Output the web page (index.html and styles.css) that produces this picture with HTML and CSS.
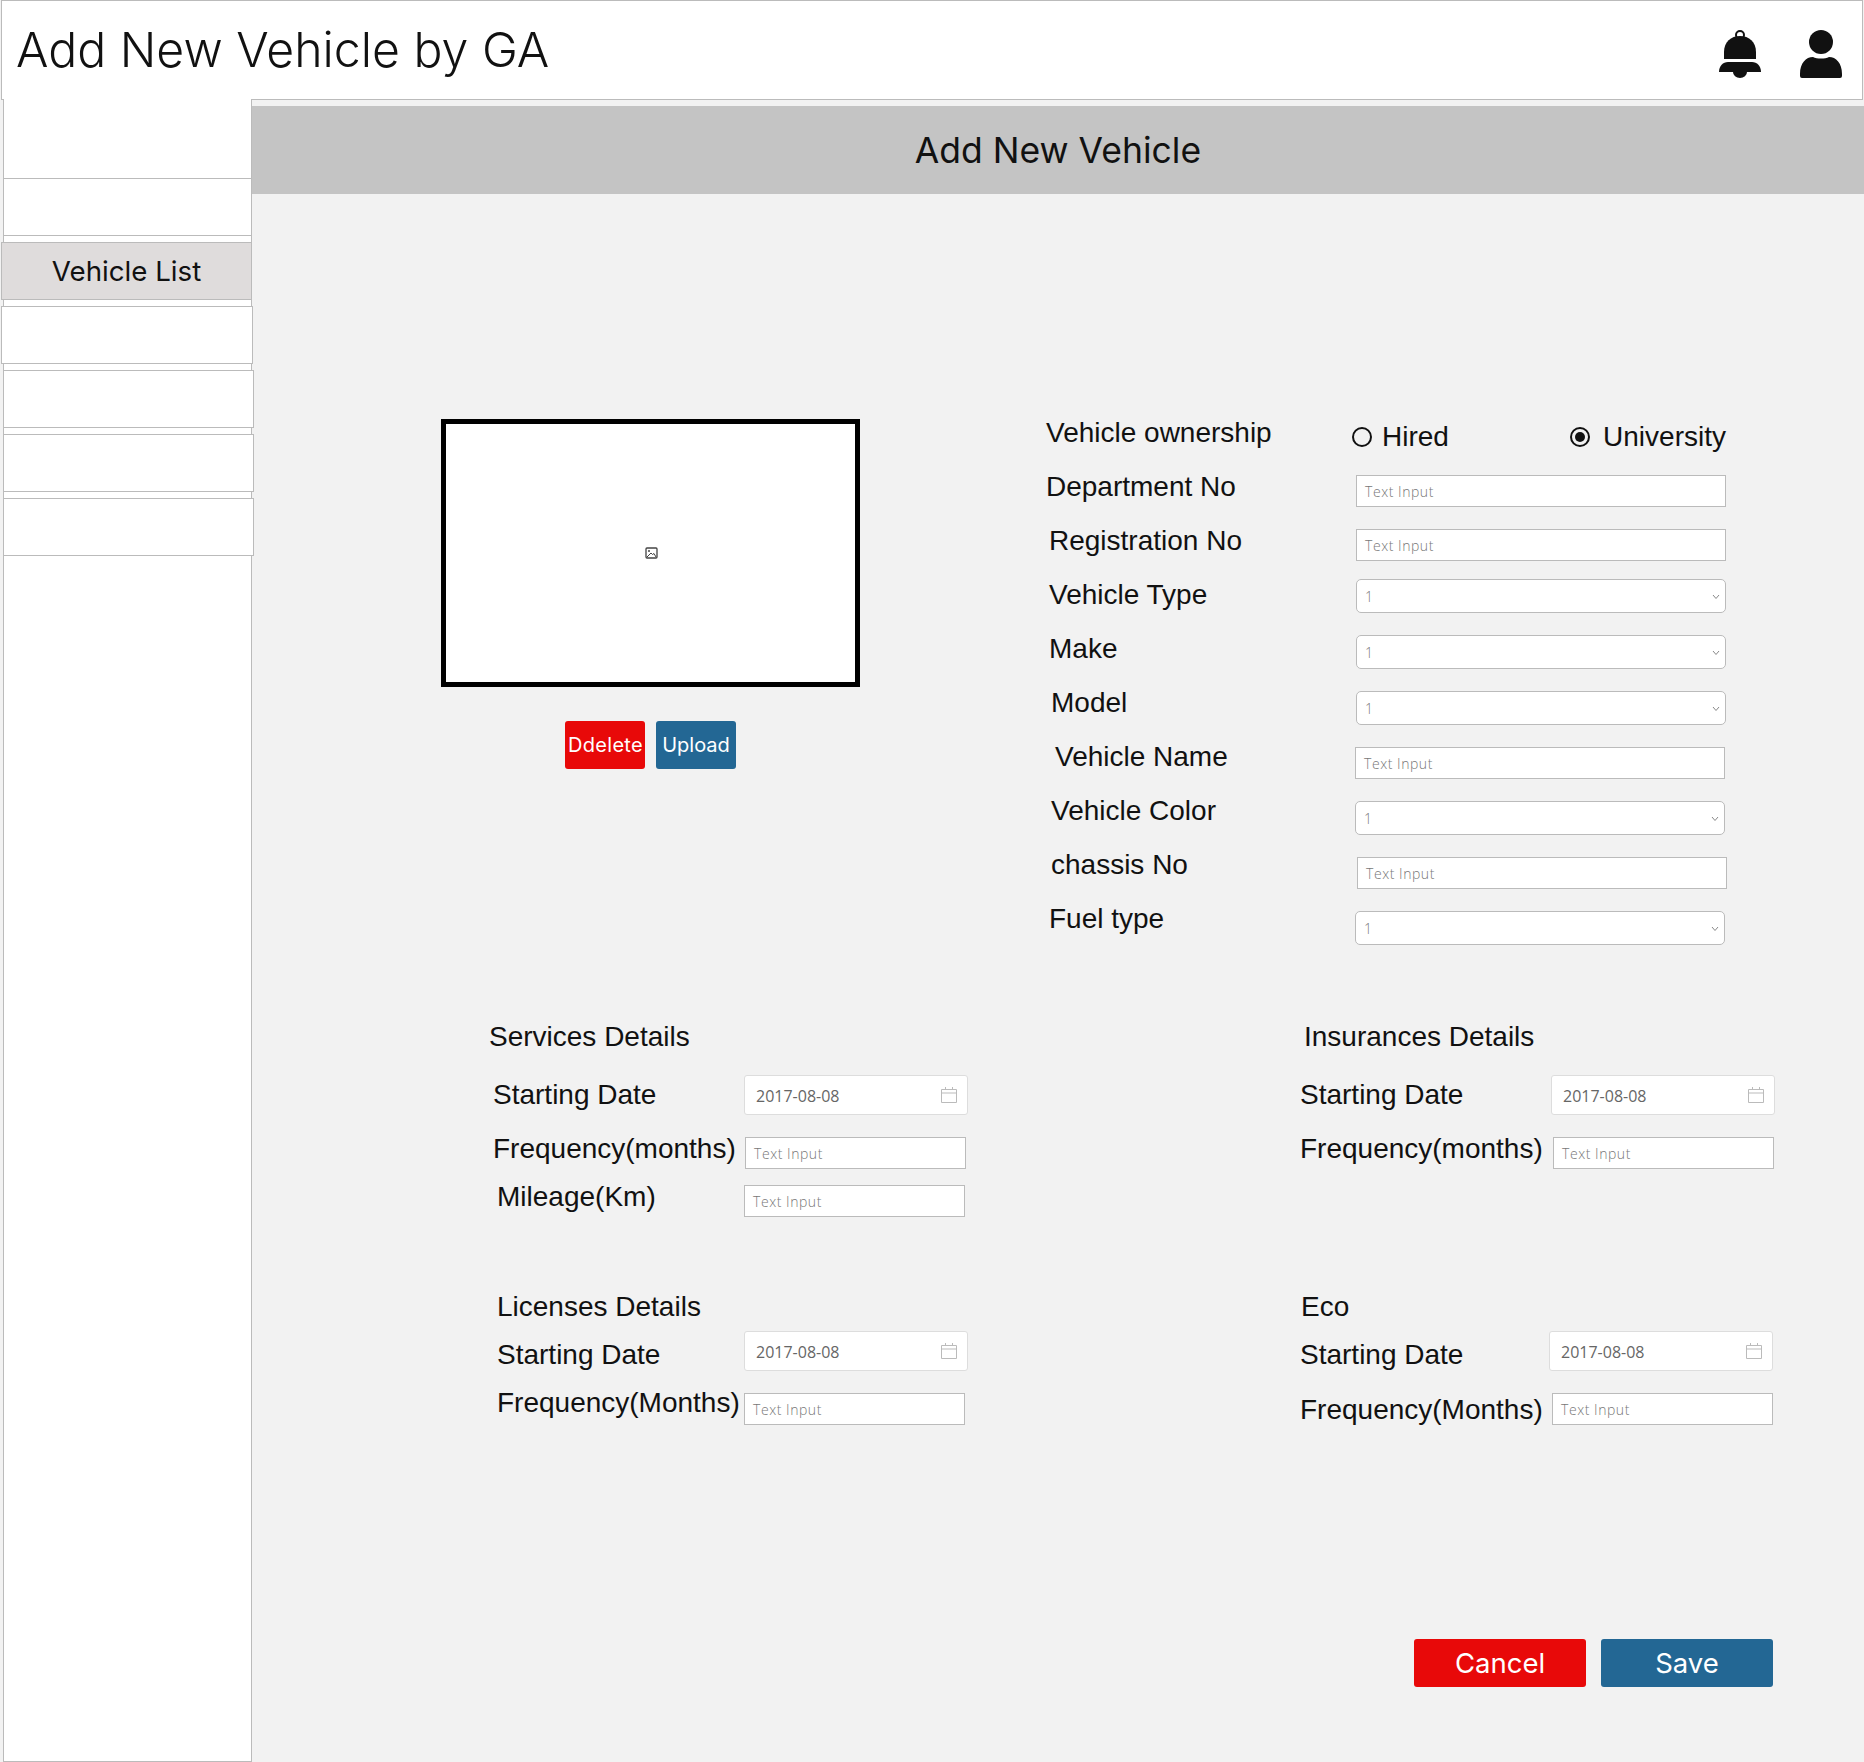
FILE: index.html
```html
<!DOCTYPE html>
<html>
<head>
    <meta charset="UTF-8">
    <title>Add New Vehicle by GA</title>
    <link rel="stylesheet" href="styles.css">
</head>
<body>
    <header class="topbar">
        <h1>Add New Vehicle by GA</h1>
        <div class="topbar-icons">
            <svg class="bell" width="44" height="48" viewBox="0 0 44 48">
                <circle cx="22" cy="5" r="4" fill="none" stroke="#111" stroke-width="2"/>
                <path d="M6 29V22C6 12 13 6 22 6C31 6 38 12 38 22V29Z" fill="#111"/>
                <path d="M1 42C1 36 5 32 10 32H34C39 32 43 36 43 42Z" fill="#111"/>
                <path d="M15 42a7 6 0 0 0 14 0Z" fill="#111"/>
            </svg>
            <svg class="user" width="42" height="48" viewBox="0 0 42 48">
                <circle cx="21" cy="12" r="12" fill="#111"/>
                <path d="M0 44C0 33 6 27 13 27C17 29 25 29 29 27C36 27 42 33 42 44V46a2 2 0 0 1-2 2H2a2 2 0 0 1-2-2Z" fill="#111"/>
            </svg>
        </div>
    </header>

    <div class="page">
        <nav class="sidebar">
            <div class="nav-first"></div>
            <div class="nav-second"></div>
            <div class="nav-item nav-active">Vehicle List</div>
            <div class="nav-item nav-left"></div>
            <div class="nav-item nav-wide"></div>
            <div class="nav-item nav-wide"></div>
            <div class="nav-item nav-wide"></div>
        </nav>

        <main class="main">
            <h2 class="banner">Add New Vehicle</h2>

            <section class="top-section">
                <div class="photo-col">
                    <div class="photo">
                        <svg class="photo-icon" width="13" height="12" viewBox="0 0 13 12">
                            <rect x="1" y="1" width="11" height="10" rx="1" fill="none" stroke="#444" stroke-width="1.3"/>
                            <circle cx="4" cy="4" r="1" fill="#444"/>
                            <path d="M2 10L6 6L7.5 7.5L9 6.5L11 10" fill="none" stroke="#444"/>
                        </svg>
                    </div>
                    <div class="photo-actions">
                        <button class="btn btn-red btn-delete">Ddelete</button>
                        <button class="btn btn-blue">Upload</button>
                    </div>
                </div>

                <div class="form-labels">
                    <div class="label">Vehicle ownership</div>
                    <div class="label">Department No</div>
                    <div class="label in-3">Registration No</div>
                    <div class="label in-3">Vehicle Type</div>
                    <div class="label in-3">Make</div>
                    <div class="label in-5">Model</div>
                    <div class="label in-9">Vehicle Name</div>
                    <div class="label in-5">Vehicle Color</div>
                    <div class="label in-5">chassis No</div>
                    <div class="label in-3">Fuel type</div>
                </div>

                <div class="form-controls">
                    <div class="radios">
                        <div class="radio"><span class="radio-mark"></span>Hired</div>
                        <div class="radio radio-gap"><span class="radio-mark radio-on"></span>University</div>
                    </div>
                    <div class="input wide nudge-1">Text Input</div>
                    <div class="input wide nudge-1">Text Input</div>
                    <div class="select wide nudge-1 up-4">1<svg class="chevron" width="8" height="6" viewBox="0 0 8 6"><path d="M1 1L4 4.5L7 1" fill="none" stroke="#888"/></svg></div>
                    <div class="select wide nudge-1">1<svg class="chevron" width="8" height="6" viewBox="0 0 8 6"><path d="M1 1L4 4.5L7 1" fill="none" stroke="#888"/></svg></div>
                    <div class="select wide nudge-1">1<svg class="chevron" width="8" height="6" viewBox="0 0 8 6"><path d="M1 1L4 4.5L7 1" fill="none" stroke="#888"/></svg></div>
                    <div class="input wide">Text Input</div>
                    <div class="select wide">1<svg class="chevron" width="8" height="6" viewBox="0 0 8 6"><path d="M1 1L4 4.5L7 1" fill="none" stroke="#888"/></svg></div>
                    <div class="input wide nudge-2">Text Input</div>
                    <div class="select wide">1<svg class="chevron" width="8" height="6" viewBox="0 0 8 6"><path d="M1 1L4 4.5L7 1" fill="none" stroke="#888"/></svg></div>
                </div>
            </section>

            <section class="details">
                <div class="block block-left">
                    <div class="label block-title">Services Details</div>
                    <div class="row">
                        <div class="label in-4 drop-4">Starting Date</div>
                        <div class="date">2017-08-08<svg width="16" height="16" viewBox="0 0 16 16"><path d="M.5 2.5H15.5V15.5H.5ZM.5 6H15.5M4.5 0V3M11.5 0V3" fill="none" stroke="#bbb"/></svg></div>
                    </div>
                    <div class="row">
                        <div class="label in-4 lift-4">Frequency(months)</div>
                        <div class="input short nudge-1">Text Input</div>
                    </div>
                    <div class="row row-tight">
                        <div class="label in-8 lift-4">Mileage(Km)</div>
                        <div class="input short">Text Input</div>
                    </div>
                </div>

                <div class="block block-right">
                    <div class="label block-title in-4">Insurances Details</div>
                    <div class="row">
                        <div class="label drop-4">Starting Date</div>
                        <div class="date">2017-08-08<svg width="16" height="16" viewBox="0 0 16 16"><path d="M.5 2.5H15.5V15.5H.5ZM.5 6H15.5M4.5 0V3M11.5 0V3" fill="none" stroke="#bbb"/></svg></div>
                    </div>
                    <div class="row">
                        <div class="label lift-4">Frequency(months)</div>
                        <div class="input short nudge-2">Text Input</div>
                    </div>
                </div>

                <div class="block block-left">
                    <div class="label block-title in-8">Licenses Details</div>
                    <div class="row row-first">
                        <div class="label in-8 drop-8">Starting Date</div>
                        <div class="date">2017-08-08<svg width="16" height="16" viewBox="0 0 16 16"><path d="M.5 2.5H15.5V15.5H.5ZM.5 6H15.5M4.5 0V3M11.5 0V3" fill="none" stroke="#bbb"/></svg></div>
                    </div>
                    <div class="row">
                        <div class="label in-8 lift-6">Frequency(Months)</div>
                        <div class="input short">Text Input</div>
                    </div>
                </div>

                <div class="block block-right">
                    <div class="label block-title in-1">Eco</div>
                    <div class="row row-first">
                        <div class="label drop-8">Starting Date</div>
                        <div class="date pull-2">2017-08-08<svg width="16" height="16" viewBox="0 0 16 16"><path d="M.5 2.5H15.5V15.5H.5ZM.5 6H15.5M4.5 0V3M11.5 0V3" fill="none" stroke="#bbb"/></svg></div>
                    </div>
                    <div class="row">
                        <div class="label drop-1">Frequency(Months)</div>
                        <div class="input short nudge-1">Text Input</div>
                    </div>
                </div>
            </section>

            <div class="actions">
                <button class="btn btn-red btn-big">Cancel</button>
                <button class="btn btn-blue btn-big">Save</button>
            </div>
        </main>
    </div>
</body>
</html>
```

FILE: styles.css
```css
* {
    box-sizing: border-box;
}

body {
    margin: 0;
    height: 1762px;
    overflow: hidden;
    background-color: #f2f2f2;
    color: #111;
    font-family: "Liberation Sans", Arial, sans-serif;
    display: flex;
    flex-direction: column;
}

/* top bar */
.topbar {
    height: 100px;
    flex: none;
    margin: 0 1px;
    padding: 0 20px 2px 14px;
    background-color: #fff;
    border: 1px solid #bbb;
    display: flex;
    justify-content: space-between;
    align-items: center;
}

.topbar h1 {
    margin: 0;
    font-family: Inter, sans-serif;
    font-size: 48.2px;
    font-weight: 300;
}

.topbar-icons {
    display: flex;
    gap: 38px;
    margin-top: 10px;
}

.page {
    flex: 1;
    display: flex;
    margin-top: -1px;
}

/* sidebar */
.sidebar {
    width: 249px;
    flex: none;
    margin-left: 3px;
    background-color: #fff;
    border-left: 1px solid #bbb;
    border-right: 1px solid #bbb;
    border-bottom: 1px solid #bbb;
    height: 1663px;
}

.nav-first {
    height: 80px;
    border-bottom: 1px solid #bbb;
}

.nav-second {
    height: 57px;
    border-bottom: 1px solid #bbb;
}

.nav-item {
    height: 58px;
    margin: 6px 0 0 -1px;
    background-color: #fff;
    border: 1px solid #bbb;
    position: relative;
}

.nav-active {
    margin: 6px -1px 0 -3px;
    background-color: #dfdcdc;
    font-family: Inter, sans-serif;
    font-size: 27.7px;
    line-height: 56px;
    text-align: center;
}

.nav-left {
    margin: 6px -2px 0 -3px;
}

.nav-wide {
    margin-right: -3px;
}

/* main area */
.main {
    flex: 1;
    min-width: 0;
}

.banner {
    height: 88px;
    margin: 7px 0 0;
    background-color: #c4c4c4;
    font-family: Inter, sans-serif;
    font-size: 35.5px;
    font-weight: 400;
    line-height: 90px;
    text-align: center;
}

.top-section {
    display: flex;
    margin-top: 211px;
    padding-left: 189px;
}

.photo-col {
    width: 419px;
    margin-top: 14px;
}

.photo {
    height: 268px;
    background-color: #fff;
    border: 5px solid #000;
    display: flex;
    justify-content: center;
    align-items: center;
}

.photo-icon {
    margin-left: 1px;
}

.photo-actions {
    display: flex;
    gap: 11px;
    margin-top: 34px;
    padding-left: 124px;
}

.btn {
    width: 80px;
    height: 48px;
    padding: 0;
    border: none;
    border-radius: 3px;
    color: #fff;
    font-family: Inter, sans-serif;
    font-size: 20px;
}

.btn-red {
    background-color: #e80909;
}

.btn-blue {
    background-color: #236794;
}

.btn-delete {
    padding-left: 1px;
    letter-spacing: 0.3px;
}

.btn-big {
    width: 172px;
    font-size: 27.5px;
}

.label {
    height: 32px;
    font-size: 28px;
    line-height: 32px;
    white-space: nowrap;
}

.form-labels {
    width: 309px;
    margin-left: 186px;
    padding-top: 1px;
}

.form-labels .label {
    height: 54px;
    line-height: 54px;
}

.in-1 { padding-left: 1px; }
.in-3 { padding-left: 3px; }
.in-4 { padding-left: 4px; }
.in-5 { padding-left: 5px; }
.in-8 { padding-left: 8px; }
.in-9 { padding-left: 9px; }

.form-controls {
    display: flex;
    flex-direction: column;
    align-items: flex-start;
    gap: 22px;
    padding-top: 15px;
}

.radios {
    width: 374px;
    height: 34px;
    margin: 0 0 -1px -3px;
    display: flex;
    justify-content: space-between;
    align-items: center;
    font-size: 28px;
}

.radio {
    display: flex;
    align-items: center;
    gap: 10px;
}

.radio-gap {
    gap: 13px;
}

.radio-mark {
    width: 20px;
    height: 20px;
    border: 2px solid #111;
    border-radius: 50%;
    display: flex;
    justify-content: center;
    align-items: center;
}

.radio-on::after {
    content: "";
    width: 10px;
    height: 10px;
    border-radius: 50%;
    background-color: #111;
}

/* fields */
.input,
.select,
.date {
    display: flex;
    align-items: center;
    background-color: #fff;
    font-family: "Open Sans", "Noto Sans", sans-serif;
    font-size: 14px;
    font-weight: 300;
    letter-spacing: 0.55px;
    color: #777;
}

.input {
    height: 32px;
    padding-left: 8px;
    border: 1px solid #bbb;
}

.select {
    height: 34px;
    padding-left: 8px;
    border: 1px solid #bbb;
    border-radius: 5px;
    position: relative;
}

.chevron {
    position: absolute;
    right: 5px;
    top: 14px;
}

.wide {
    width: 370px;
}

.short {
    width: 221px;
}

.date {
    width: 224px;
    height: 40px;
    padding: 2px 10px 0 11px;
    border: 1px solid #ddd;
    border-radius: 3px;
    justify-content: space-between;
    font-size: 16px;
    font-weight: 400;
    letter-spacing: 0;
    color: #666;
}

.date svg {
    margin-top: -2px;
}

.nudge-1 { margin-left: 1px; }
.nudge-2 { margin-left: 2px; }
.pull-2 { margin-left: -2px; }
.up-4 { margin-top: -4px; }

/* lower blocks */
.details {
    display: grid;
    grid-template-columns: 811px 1fr;
    grid-template-rows: 270px 269px;
    margin-top: 75px;
    margin-left: 237px;
}

.row {
    display: flex;
    align-items: flex-start;
    margin-top: 22px;
}

.row-tight {
    margin-top: 16px;
}

.row-first {
    margin-top: 8px;
}

.block-left .row .label {
    width: 255px;
    flex: none;
}

.block-right .row .label {
    width: 251px;
    flex: none;
}

.lift-4 { margin-top: -4px; }
.lift-6 { margin-top: -6px; }
.drop-1 { margin-top: 1px; }
.drop-4 { margin-top: 4px; }
.drop-8 { margin-top: 8px; }

.actions {
    display: flex;
    justify-content: flex-end;
    gap: 15px;
    margin-top: 79px;
    margin-right: 91px;
}
```
